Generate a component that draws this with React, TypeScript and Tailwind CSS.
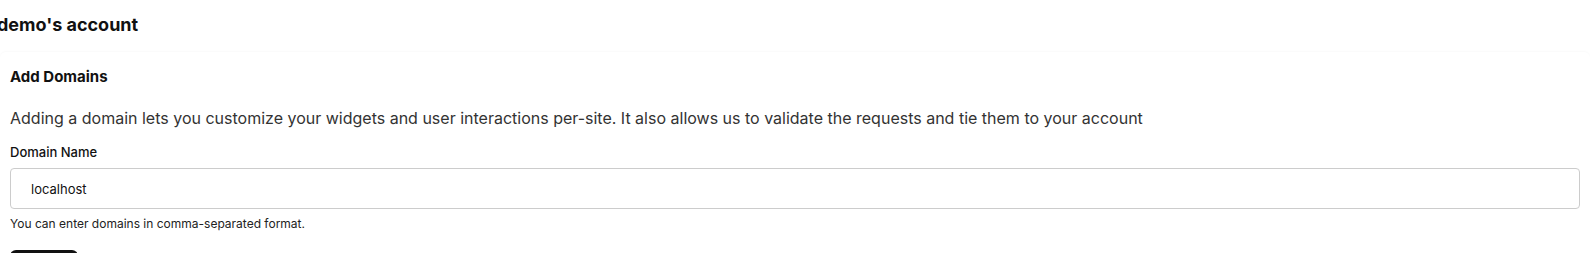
export default function App() {
  return (
    <div className="h-[253px] overflow-hidden bg-white font-['Inter',sans-serif] text-[#111]">
      <h1 className="-ml-[3px] pt-[13px] text-[18px] font-bold leading-[24px] text-[#111]">demo's account</h1>

      <div className="mt-[15px] rounded-md bg-white px-[10px] pt-[14px] shadow-[0_-1px_2px_rgba(0,0,0,0.025)]">
        <h2 className="text-[15px] font-bold leading-[22px] text-[#111]">Add Domains</h2>

        <p className="mt-[19px] text-[16px] leading-[22px] text-[#333]">
          Adding a domain lets you customize your widgets and user interactions per-site. It also allows us to validate the requests and tie them to your account
        </p>

        <label className="mt-[14px] block text-[13px] font-medium leading-[18px] text-[#111]">Domain Name</label>

        <input
          readOnly
          value="localhost"
          className="mt-[7px] block h-[41px] w-full rounded-[4px] border border-[#ccc] bg-white px-[20px] text-[13px] text-[#111] outline-none"
        />

        <p className="mt-[7px] text-[12px] leading-[16px] text-[#222]">You can enter domains in comma-separated format.</p>

        <button className="mt-[18px] h-[32px] w-[68px] rounded-md bg-[#111] text-[13px] font-medium text-white">Add</button>
      </div>
    </div>
  );
}
